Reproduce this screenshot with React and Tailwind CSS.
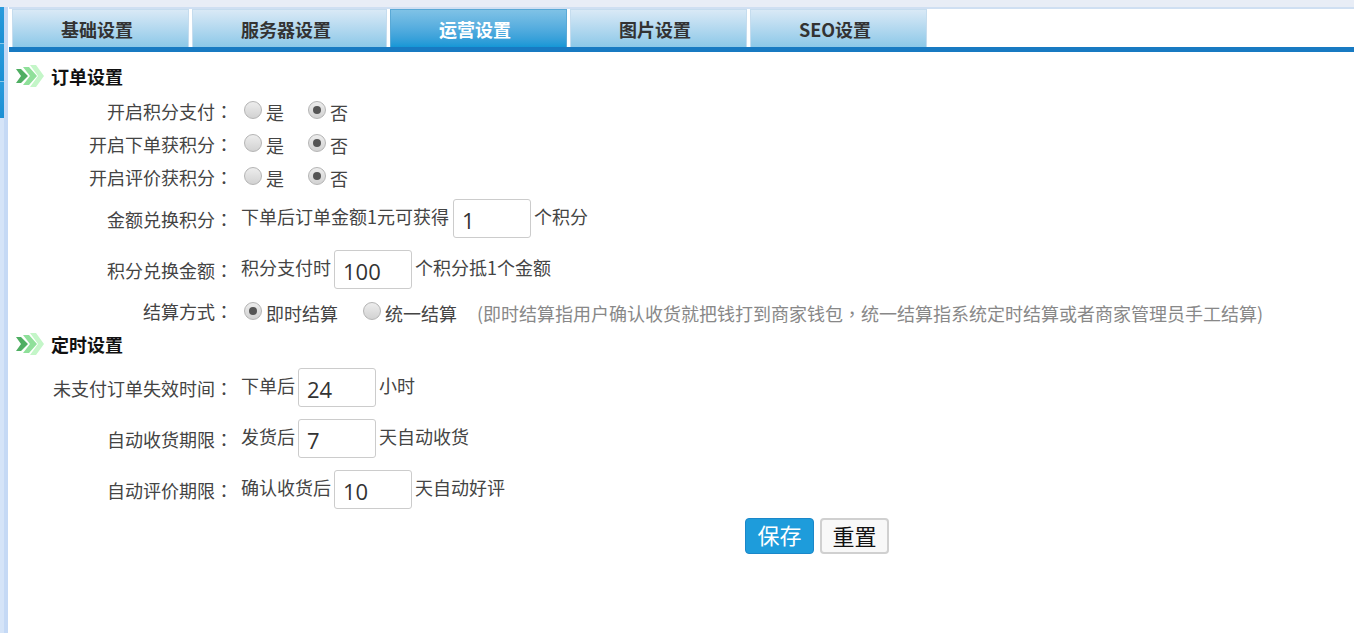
const CJK = "font-['Noto_Sans_CJK_SC','Liberation_Sans',sans-serif]";
const TC = "font-['Noto_Sans_CJK_TC',sans-serif]";

function Tab({ label, width, active }) {
  return (
    <div
      className={
        active
          ? `${width} h-[38px] pr-[7px] pt-[1px] flex items-center justify-center text-[18px] font-bold text-white border border-b-0 border-[#5aa9d6] bg-gradient-to-b from-[#7fc2e6] to-[#1497d6]`
          : `${width} h-[38px] pr-[7px] pt-[1px] flex items-center justify-center text-[18px] font-bold text-[#333] border-t border-x border-[#c5dcee] bg-gradient-to-b from-[#d9e9f6] to-[#8cc8e8]`
      }
    >
      {label}
    </div>
  );
}

function Radio({ checked }) {
  return (
    <span className="w-[18px] h-[18px] mt-[1px] shrink-0 rounded-full border border-[#b4b4b4] bg-gradient-to-b from-[#ededed] to-[#d2d2d2] flex items-center justify-center">
      {checked && <span className="w-[8px] h-[8px] rounded-full bg-[#555]" />}
    </span>
  );
}

function Choice({ label, checked, className = "" }) {
  return (
    <span className={`flex items-start ${className}`}>
      <Radio checked={checked} />
      <span className="ml-[4px] mt-[1px] leading-[22px]">{label}</span>
    </span>
  );
}

function Label({ children, className = "" }) {
  return (
    <div className={`w-[233px] shrink-0 text-right leading-[22px] ${className}`}>
      {children}
      <span className={TC}>：</span>
    </div>
  );
}

function Section({ title, className = "" }) {
  return (
    <div className={`flex items-center pl-[16px] h-[28px] ${className}`}>
      <svg width="28" height="22" viewBox="0 0 28 22" className="shrink-0">
        <path d="M14 0h6l8 11-8 11h-6l8-11z" fill="#c4f6c8" />
        <path d="M7 2h6l8 9-8 9H7l7-9z" fill="#8fe09a" />
        <path d="M0 4h5l7 7-7 7H0l5-7z" fill="#4fae62" />
      </svg>
      <span className="ml-[7px] text-[18px] font-bold text-[#111]">{title}</span>
    </div>
  );
}

function Field({ value, width = "w-[78px]" }) {
  return (
    <div className={`${width} h-[39px] mx-[3px] shrink-0 border border-[#ccc] rounded-[3px] bg-white pl-[8px] text-[22px] leading-[41px] text-[#333] font-['Open_Sans',sans-serif]`}>
      {value}
    </div>
  );
}

function RadioRow({ label, className = "" }) {
  return (
    <div className={`flex h-[33px] items-start ${className}`}>
      <Label>{label}</Label>
      <div className="flex ml-[11px]">
        <Choice label="是" />
        <Choice label="否" checked className="ml-[24px]" />
      </div>
    </div>
  );
}

function InputRow({ label, before, value, after, width, className = "", beforeClass = "" }) {
  return (
    <div className={`flex items-center ${className}`}>
      <Label>{label}</Label>
      <span className={`ml-[8px] -mt-[5px] ${beforeClass}`}>{before}</span>
      <Field value={value} width={width} />
      <span className="-mt-[5px]">{after}</span>
    </div>
  );
}

export default function App() {
  return (
    <div className={`w-[1354px] h-[633px] overflow-hidden bg-white flex ${CJK} text-[18px] text-[#444]`}>
      <div className="w-[9px] shrink-0 bg-[#e8edf6] pt-[7px] flex">
        <div className="w-[4px] h-full bg-[#d5e4f8] flex flex-col">
          <div className="h-[37px] bg-gradient-to-b from-[#2a9bdc] to-[#1a8fd4] border-b border-[#8cc8e8]" />
          <div className="h-[38px] bg-gradient-to-b from-[#2a9bdc] to-[#1a8fd4] border-b border-[#8cc8e8]" />
          <div className="h-[36px] bg-gradient-to-b from-[#2a9bdc] to-[#1a8fd4]" />
        </div>
        <div className="w-[4px] h-full bg-[#c5d9f5]" />
        <div className="w-px h-full bg-white" />
      </div>
      <div className="flex-1 min-w-0">
        <div className="h-[9px] bg-[#e8edf6] border-b-2 border-[#cfdff2]" />
        <div className="flex gap-[3px] pl-[3px] h-[38px]">
          <Tab label="基础设置" width="w-[177px]" />
          <Tab label="服务器设置" width="w-[195px]" />
          <Tab label="运营设置" width="w-[177px]" active />
          <Tab label="图片设置" width="w-[177px]" />
          <Tab label="SEO设置" width="w-[177px]" />
        </div>
        <div className="h-[5px] bg-[#187ac2]" />
        <div className="ml-[-9px]">
          <Section title="订单设置" className="mt-[10px]" />
          <RadioRow label="开启积分支付" className="mt-[10px]" />
          <RadioRow label="开启下单获积分" />
          <RadioRow label="开启评价获积分" />
          <InputRow label="金额兑换积分" before="下单后订单金额1元可获得" beforeClass="pr-[1px]" value="1" after="个积分" />
          <InputRow className="mt-[12px]" label="积分兑换金额" before="积分支付时" value="100" after="个积分抵1个金额" />
          <div className="flex items-start mt-[12px]">
            <Label className="-mt-[1px]">结算方式</Label>
            <div className="flex ml-[11px]">
              <Choice label="即时结算" checked />
              <Choice label="统一结算" className="ml-[25px]" />
              <span className="ml-[20px] mt-[1px] leading-[22px] text-[#888]">
                (即时结算指用户确认收货就把钱打到商家钱包<span className={TC}>，</span>统一结算指系统定时结算或者商家管理员手工结算)
              </span>
            </div>
          </div>
          <Section title="定时设置" className="mt-[6px]" />
          <InputRow className="mt-[10px]" label="未支付订单失效时间" before="下单后" value="24" after="小时" />
          <InputRow className="mt-[12px]" label="自动收货期限" before="发货后" value="7" after="天自动收货" />
          <InputRow className="mt-[12px]" label="自动评价期限" before="确认收货后" value="10" after="天自动好评" />
          <div className="flex justify-center gap-[6px] mt-[9px] pl-[280px]">
            <button className="w-[69px] h-[36px] pb-[5px] rounded-[4px] border border-[#1b87c9] bg-[#1e9cdb] text-white text-[22px] leading-[30px]">保存</button>
            <button className="w-[69px] h-[36px] pb-[5px] rounded-[4px] border-2 border-[#d0d0d0] bg-[#f8f8f8] text-[#111] text-[22px] leading-[30px]">重置</button>
          </div>
        </div>
      </div>
    </div>
  );
}
